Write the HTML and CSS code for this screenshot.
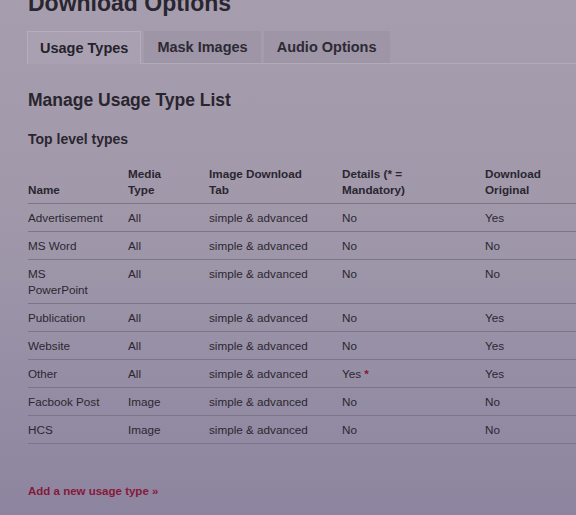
FILE: index.html
```html
<!DOCTYPE html>
<html>
<head>
<meta charset="utf-8">
<link rel="stylesheet" href="styles.css">
</head>
<body>
<div class="page">
  <h1 class="title">Download Options</h1>
  <div class="tabs">
    <div class="tab active">Usage Types</div>
    <div class="tab">Mask Images</div>
    <div class="tab">Audio Options</div>
  </div>
  <h2 class="heading">Manage Usage Type List</h2>
  <h3 class="subheading">Top level types</h3>
  <table class="types">
    <thead>
      <tr>
        <th class="c-name">Name</th>
        <th class="c-media">Media<br>Type</th>
        <th class="c-tab">Image Download<br>Tab</th>
        <th class="c-details">Details (* =<br>Mandatory)</th>
        <th class="c-orig">Download<br>Original</th>
      </tr>
    </thead>
    <tbody>
      <tr><td>Advertisement</td><td>All</td><td>simple &amp; advanced</td><td>No</td><td>Yes</td></tr>
      <tr><td>MS Word</td><td>All</td><td>simple &amp; advanced</td><td>No</td><td>No</td></tr>
      <tr><td>MS<br>PowerPoint</td><td>All</td><td>simple &amp; advanced</td><td>No</td><td>No</td></tr>
      <tr><td>Publication</td><td>All</td><td>simple &amp; advanced</td><td>No</td><td>Yes</td></tr>
      <tr><td>Website</td><td>All</td><td>simple &amp; advanced</td><td>No</td><td>Yes</td></tr>
      <tr><td>Other</td><td>All</td><td>simple &amp; advanced</td><td>Yes <span class="req">*</span></td><td>Yes</td></tr>
      <tr><td>Facbook Post</td><td>Image</td><td>simple &amp; advanced</td><td>No</td><td>No</td></tr>
      <tr><td>HCS</td><td>Image</td><td>simple &amp; advanced</td><td>No</td><td>No</td></tr>
    </tbody>
  </table>
  <a class="add-link" href="#">Add a new usage type »</a>
</div>
</body>
</html>
```

FILE: styles.css
```css
html, body {
  margin: 0;
  padding: 0;
  height: 100%;
  overflow: hidden;
}
body {
  background: linear-gradient(180deg, #a69eae 0%, #a199aa 40%, #958da4 75%, #8d859f 100%);
  font-family: "Liberation Sans", Arial, sans-serif;
  color: #28242e;
}
.page {
  padding-left: 28px;
}
.title {
  margin: -11px 0 0 0;
  font-size: 23px;
  line-height: 28px;
  font-weight: bold;
  color: #2a2630;
}
.tabs {
  display: flex;
  gap: 3px;
  margin: 14px 0 0 -1px;
  border-bottom: 1px solid #b2abb8;
  height: 32px;
}
.tab {
  padding: 0 13px;
  font-size: 14.5px;
  font-weight: bold;
  line-height: 32px;
  background: #9e95a7;
  color: #2e2a33;
}
.tab.active {
  background: #a9a1b1;
  border: 1px solid #b5aebb;
  border-bottom: none;
  line-height: 32px;
  height: 32px;
  margin-bottom: -1px;
  padding: 0 12px;
  color: #26222b;
}
.heading {
  margin: 25px 0 0 0;
  font-size: 17.5px;
  line-height: 22px;
  font-weight: bold;
  color: #29252f;
}
.subheading {
  margin: 19px 0 0 0;
  font-size: 14px;
  line-height: 18px;
  font-weight: bold;
  color: #2a2630;
}
.types {
  margin-top: 12px;
  border-collapse: collapse;
  width: 548px;
  font-size: 11.7px;
  line-height: 16px;
}
.types th, .types td {
  text-align: left;
  padding: 6px 0 5px 0;
  border-bottom: 1px solid #7c7487;
  vertical-align: top;
}
.types th {
  vertical-align: bottom;
  font-weight: bold;
  color: #2a2630;
}
.types td {
  color: #2b2731;
}
.c-name { width: 100px; }
.c-media { width: 81px; }
.c-tab { width: 133px; }
.c-details { width: 143px; }
.req {
  color: #8a1538;
  font-weight: bold;
}
.add-link {
  display: inline-block;
  margin-top: 41px;
  font-size: 11.5px;
  font-weight: bold;
  color: #86183a;
  text-decoration: none;
}
```
